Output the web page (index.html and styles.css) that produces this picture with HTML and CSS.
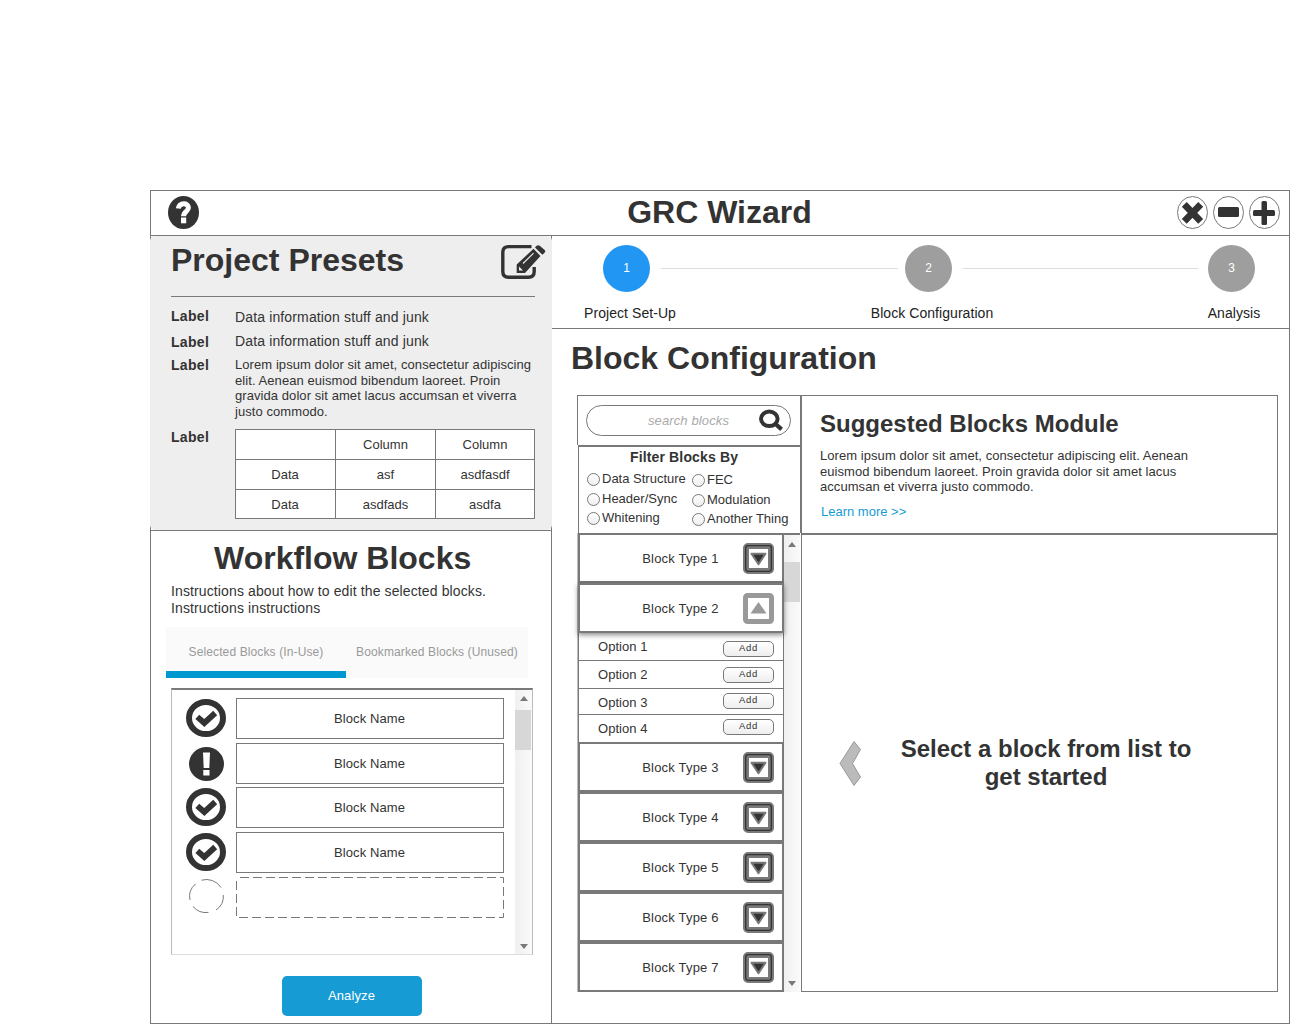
FILE: index.html
```
<!DOCTYPE html>
<html lang="en">
<head>
<meta charset="utf-8">
<title>GRC Wizard</title>
<link rel="stylesheet" href="styles.css">
</head>
<body>
<svg class="defs" width="0" height="0" aria-hidden="true">
  <symbol id="check" viewBox="0 0 40 38">
    <ellipse cx="20" cy="19" rx="17" ry="16" fill="#fff" stroke="#333" stroke-width="6"/>
    <path d="M11.300 17.800 L18.300 24 L29.200 14" fill="none" stroke="#333" stroke-width="5.800"/>
  </symbol>
  <symbol id="down" viewBox="0 0 31 31">
    <rect x="3" y="3" width="25" height="25" rx="2" fill="#fff" stroke="#797979" stroke-width="6"/>
    <rect x="2.7" y="2.7" width="25.6" height="25.6" rx="2.5" fill="none" stroke="#333" stroke-width="1.3"/>
    <path d="M8.5 10.7 H22.5 L15.5 21.3 Z" fill="#333" stroke="#797979" stroke-width="2" stroke-linejoin="round"/>
  </symbol>
  <symbol id="up" viewBox="0 0 31 31">
    <rect x="2.5" y="2.5" width="26" height="26" rx="2" fill="#fff" stroke="#999" stroke-width="5"/>
    <path d="M7.5 20.500 H23.5 L15.5 9 Z" fill="#999"/>
  </symbol>
</svg>
<div class="window">
  <header class="titlebar">
    <svg class="help" width="31" height="33" viewBox="0 0 31 33">
      <ellipse cx="15.500" cy="16.500" rx="15.500" ry="16.500" fill="#333"/>
      <path d="M10.300 12.500 C11 6.300 20.400 6.300 20.400 11.800 C20.400 15.300 15.600 15.500 15.600 20.300" fill="none" stroke="#fff" stroke-width="5"/>
      <rect x="13" y="21.500" width="5.200" height="5.800" fill="#fff"/>
    </svg>
    <h1>GRC Wizard</h1>
    <div class="controls">
      <svg width="31" height="33" viewBox="0 0 31 33"><ellipse cx="15.500" cy="16.500" rx="15" ry="16" fill="#fff" stroke="#797979"/><path d="M7.300 8.300 L23.700 25.400 M23.700 8.300 L7.300 25.400" stroke="#333" stroke-width="6.800"/></svg>
      <svg width="31" height="33" viewBox="0 0 31 33"><ellipse cx="15.500" cy="16.500" rx="15" ry="16" fill="#fff" stroke="#797979"/><rect x="5" y="11" width="21" height="10" rx="1.500" fill="#333"/></svg>
      <svg width="31" height="33" viewBox="0 0 31 33"><ellipse cx="15.500" cy="16.500" rx="15" ry="16" fill="#fff" stroke="#797979"/><rect x="4" y="14" width="22" height="6" rx="1.500" fill="#333"/><rect x="12.500" y="5" width="5.500" height="24" rx="1.500" fill="#333"/></svg>
    </div>
  </header>
  <div class="columns">
    <aside class="side">
      <section class="presets">
        <div class="presets-head">
          <h2>Project Presets</h2>
          <svg width="45" height="36" viewBox="0 0 45 36">
            <path d="M30.500 2.600 H7.500 Q1.800 2.600 1.800 8.300 V27.500 Q1.800 33.300 7.500 33.300 H27.500 Q33.200 33.300 33.200 27.500 V23" fill="none" stroke="#333" stroke-width="3.400"/>
            <path d="M15.700 29 V20.500 L32.500 4.800 L39.500 12 L24 29 Z" fill="#333"/>
            <path d="M34 3.400 Q36.500 .2 39 2 L43.700 6 Q45.300 8 41.300 10.800 Z" fill="#333"/>
            <path d="M22 19.500 L32.500 9.200" stroke="#eee" stroke-width="1.100"/>
            <path d="M18 22.500 V26.500 H22 L20 24.500 Z" fill="#eee"/>
          </svg>
        </div>
        <dl class="fields">
          <dt>Label</dt><dd class="line">Data information stuff and junk</dd>
          <dt class="raised">Label</dt><dd class="line second">Data information stuff and junk</dd>
          <dt>Label</dt><dd class="para">Lorem ipsum dolor sit amet, consectetur adipiscing<br>elit. Aenean euismod bibendum laoreet. Proin<br>gravida dolor sit amet lacus accumsan et viverra<br>justo commodo.</dd>
          <dt>Label</dt>
          <dd class="tablecell">
            <div class="table">
              <span></span><span>Column</span><span>Column</span>
              <span>Data</span><span>asf</span><span>asdfasdf</span>
              <span>Data</span><span>asdfads</span><span>asdfa</span>
            </div>
          </dd>
        </dl>
      </section>
      <section class="workflow">
        <h2>Workflow Blocks</h2>
        <p class="instructions">Instructions about how to edit the selected blocks.<br>Instructions instructions</p>
        <div class="tabs">
          <div class="tab active">Selected Blocks (In-Use)</div>
          <div class="tab">Bookmarked Blocks (Unused)</div>
        </div>
        <div class="blocklist">
          <div class="rows">
            <svg width="40" height="38"><use href="#check"/></svg><div class="block">Block Name</div>
            <svg width="35" height="34" viewBox="0 0 35 34"><ellipse cx="17.500" cy="17" rx="17.500" ry="17" fill="#333"/><path d="M14 5.500 H21 L20.300 21 H14.700 Z M14.300 23 H20.500 V28.500 H14.300 Z" fill="#fff"/></svg><div class="block">Block Name</div>
            <svg width="40" height="38"><use href="#check"/></svg><div class="block">Block Name</div>
            <svg width="40" height="38"><use href="#check"/></svg><div class="block">Block Name</div>
            <svg class="pending" width="35" height="34" viewBox="0 0 35 34"><path d="M12.500 1.200 A17 16.500 0 0 1 32 8.500 M34.300 16 A17 16.500 0 0 1 27 31 M19.500 33.400 A17 16.500 0 0 1 4 27.500 M1 21 A17 16.500 0 0 1 6.500 5" fill="none" stroke="#797979"/></svg>
            <svg class="empty" width="268" height="41" viewBox="0 0 268 41"><path d="M4 .5 H267.500 V40.500 H.5 V.5" fill="none" stroke="#797979" stroke-dasharray="9 4"/></svg>
          </div>
          <div class="scroll">
            <i class="arrow-up"></i><i class="thumb"></i><i class="arrow-down"></i>
          </div>
        </div>
        <button class="analyze">Analyze</button>
      </section>
    </aside>
    <main class="main">
      <div class="stepper">
        <div class="step current"><b>1</b><span>Project Set-Up</span></div>
        <i class="rail first"></i>
        <div class="step"><b>2</b><span>Block Configuration</span></div>
        <i class="rail"></i>
        <div class="step"><b>3</b><span>Analysis</span></div>
      </div>
      <h2 class="heading">Block Configuration</h2>
      <div class="config">
        <div class="left">
          <div class="searchbox">
            <div class="search">
              <span>search blocks</span>
              <svg width="26" height="24" viewBox="0 0 26 24"><ellipse cx="11.300" cy="9.800" rx="8.300" ry="7.200" fill="none" stroke="#333" stroke-width="4"/><path d="M17 14.500 L23.600 20.300" stroke="#333" stroke-width="4.200"/></svg>
            </div>
          </div>
          <div class="filters">
            <h4>Filter Blocks By</h4>
            <div class="radios">
              <div>
                <label><i></i>Data Structure</label>
                <label><i></i>Header/Sync</label>
                <label><i></i>Whitening</label>
              </div>
              <div class="shift">
                <label><i></i>FEC</label>
                <label><i></i>Modulation</label>
                <label><i></i>Another Thing</label>
              </div>
            </div>
          </div>
          <div class="types">
            <div class="items">
              <div class="item"><span>Block Type 1</span><svg width="31" height="31"><use href="#down"/></svg></div>
              <div class="item open"><span>Block Type 2</span><svg width="31" height="31"><use href="#up"/></svg></div>
              <div class="options">
                <div class="option">Option 1<button>Add</button></div>
                <div class="option">Option 2<button>Add</button></div>
                <div class="option">Option 3<button>Add</button></div>
                <div class="option">Option 4<button>Add</button></div>
              </div>
              <div class="item"><span>Block Type 3</span><svg width="31" height="31"><use href="#down"/></svg></div>
              <div class="item"><span>Block Type 4</span><svg width="31" height="31"><use href="#down"/></svg></div>
              <div class="item"><span>Block Type 5</span><svg width="31" height="31"><use href="#down"/></svg></div>
              <div class="item"><span>Block Type 6</span><svg width="31" height="31"><use href="#down"/></svg></div>
              <div class="item"><span>Block Type 7</span><svg width="31" height="31"><use href="#down"/></svg></div>
            </div>
            <div class="scroll">
              <i class="arrow-up"></i><i class="thumb"></i><i class="arrow-down"></i>
            </div>
          </div>
        </div>
        <div class="right">
          <div class="suggested">
            <h3>Suggested Blocks Module</h3>
            <p>Lorem ipsum dolor sit amet, consectetur adipiscing elit. Aenean<br>euismod bibendum laoreet. Proin gravida dolor sit amet lacus<br>accumsan et viverra justo commodo.</p>
            <a>Learn more &gt;&gt;</a>
          </div>
          <div class="placeholder">
            <svg width="24" height="48" viewBox="0 0 24 48"><path d="M15 1.500 L21.500 9.500 L13.500 23.500 L21.500 37 L15 45.500 L1 23.500 Z" fill="#bbb" stroke="#999"/></svg>
            <h3>Select a block from list to<br>get started</h3>
          </div>
        </div>
      </div>
    </main>
  </div>
</div>
</body>
</html>
```
FILE: styles.css
```
* { box-sizing: border-box; }
body {
  margin: 0;
  background: #fff;
  color: #333;
  font: 13px/15px "Liberation Sans", Arial, sans-serif;
  white-space: nowrap;
  overflow: hidden;
}
h1, h2, h3, h4, p, dl, dd { margin: 0; }
h1, h2 { font-size: 32px; line-height: 36px; }
h3 { font-size: 24px; line-height: 28px; }
svg { display: block; flex: none; }
.defs { position: absolute; }
button { font-family: inherit; padding: 0; }

.window { margin: 190px 0 0 150px; width: 1140px; height: 834px; border: 1px solid #797979; }
.titlebar {
  display: grid;
  grid-template-columns: 94px 1fr 104px;
  height: 45px;
  padding: 5px 8px 0 17px;
  border-bottom: 1px solid #797979;
}
.titlebar h1 { text-align: center; line-height: 32px; }
.controls { display: flex; gap: 5px; }

.columns { display: flex; height: 787px; }
.side { width: 401px; border-right: 1px solid #797979; }
.presets {
  width: 402px;
  height: 294px;
  margin-left: -1px;
  padding: 6px 17px 0 21px;
  background: #eee;
  border-radius: 5px;
}
.presets-head {
  display: flex;
  justify-content: space-between;
  height: 55px;
  margin-bottom: 10px;
  border-bottom: 1px solid #797979;
}
.presets-head svg { margin: 2px -11px 0 0; }
.fields { display: grid; grid-template-columns: 64px 300px; grid-template-rows: 27px 22px 72px 90px; }
.fields dt { font-weight: bold; font-size: 14px; line-height: 18px; letter-spacing: .3px; }
.fields .raised { margin-top: -1px; }
.line { font-size: 14px; line-height: 20px; letter-spacing: .14px; }
.second { margin-top: -3px; }
.para { line-height: 15.6px; margin-top: 1px; letter-spacing: .07px; }
.tablecell { padding-top: 1px; }
.table {
  display: grid;
  grid-template-columns: 100px 100px 99px;
  grid-template-rows: 30px 30px 29px;
  width: 300px;
  background: #fff;
  border: solid #797979;
  border-width: 1px 0 0 1px;
}
.table span { text-align: center; line-height: 29px; border: solid #797979; border-width: 0 1px 1px 0; }
.table span:nth-child(3n+1) { padding-right: 1px; }

.workflow { height: 493px; border-top: 1px solid #797979; }
.workflow h2 { padding: 9px 0 0 63px; }
.instructions { margin: 7px 0 0 20px; font-size: 14px; line-height: 17px; letter-spacing: .12px; }
.tabs { display: flex; width: 362px; height: 51px; margin: 10px 0 10px 15px; background: #fafafa; }
.tab { width: 182px; text-align: center; font-size: 12px; line-height: 50px; color: #999; letter-spacing: .12px; }
.tab.active { width: 180px; border-bottom: 7px solid #0099cf; }
.blocklist {
  display: flex;
  justify-content: space-between;
  width: 362px;
  height: 267px;
  margin-left: 20px;
  border: 1px solid #bbb;
  border-top: 2px solid #797979;
  border-bottom-color: #ddd;
}
.rows {
  display: grid;
  grid-template-columns: 40px 268px;
  grid-template-rows: 45px 44px 45px 45px 41px;
  column-gap: 10px;
  justify-items: center;
  padding: 8px 0 0 14px;
}
.rows > svg { margin-top: 1px; }
.rows > svg:nth-child(3) { margin-top: 4px; }
.rows > svg.pending { margin-top: 2px; }
.rows > svg.empty { margin-top: 0; }
.block { width: 268px; height: 41px; padding-right: 1px; border: 1px solid #797979; text-align: center; line-height: 39px; letter-spacing: .1px; }
.scroll {
  display: flex;
  flex-direction: column;
  align-items: center;
  width: 17px;
  background: linear-gradient(90deg, #f0f0f0, #fafafa);
}
.scroll i { flex: none; }
.arrow-up { border: 5px solid transparent; border-width: 0 4.5px 5px; border-bottom-color: #797979; margin-top: 6px; }
.arrow-down { border: 5px solid transparent; border-width: 5px 4.5px 0; border-top-color: #797979; margin-top: auto; }
.thumb { align-self: flex-start; width: 16px; height: 40px; margin-top: 9px; background: #d7d7d7; }
.blocklist .arrow-down { margin-bottom: 5px; }
.analyze {
  display: block;
  width: 140px;
  height: 40px;
  margin: 21px 0 0 131px;
  padding: 0 1px 2px 0;
  border: 0;
  border-radius: 5px;
  background: #169bd5;
  color: #fff;
  font-size: 13px;
  letter-spacing: .1px;
}

.main { flex: 1; }
.stepper { display: flex; height: 93px; padding: 9px 34px 0 51px; border-bottom: 1px solid #797979; }
.step { display: flex; flex-direction: column; align-items: center; gap: 13px; width: 47px; font-size: 14px; line-height: 16px; color: #222; }
.step b { width: 47px; height: 47px; border-radius: 50%; background: #9e9e9e; color: #fff; font: 12px/46px "Liberation Sans", Arial, sans-serif; text-align: center; }
.step.current b { background: #2196f3; }
.step span { margin-left: 7px; letter-spacing: .06px; }
.step:last-child span { margin-left: 5px; }
.rail { flex: none; width: 235px; height: 1px; margin: 23px 10px 0 11px; background: #ddd; }
.rail.first { width: 237px; margin-right: 7px; }
.heading { padding: 11px 0 0 19px; }
.config { display: flex; width: 701px; margin: 19px 0 0 25px; }
.left { width: 223px; }
.searchbox { height: 50px; padding: 9px 9px 0 8px; border: solid #797979; border-width: 1px 0 0 1px; }
.search {
  display: grid;
  grid-template-columns: 27px 1fr 26px;
  height: 31px;
  padding: 3px 6px 0 5px;
  border: 1px solid #797979;
  border-radius: 16px;
  text-align: center;
  font-style: italic;
  line-height: 23px;
  color: #aaa;
}
.search span { grid-column: 2; letter-spacing: .12px; }
.filters { height: 88px; margin-left: 1px; border: solid #797979; border-width: 2px 0 0 1px; }
.filters h4 { padding: 1px 0 0 51px; font-size: 14px; line-height: 18px; letter-spacing: .14px; }
.radios { display: grid; grid-template-columns: 105px 1fr; padding: 4px 0 0 8px; }
.radios label { display: flex; gap: 2px; height: 19.500px; line-height: 17px; }
.radios i { width: 13px; height: 13px; margin-top: 3px; border: 1px solid #797979; border-radius: 50%; background: linear-gradient(#fff, #eee); }
.shift { padding-top: 1px; }
.types { display: flex; height: 459px; border: solid #bbb; border-width: 0 0 0 1px; }
.items { width: 206px; }
.item {
  display: grid;
  grid-template-columns: 31px 1fr 31px;
  align-items: center;
  height: 50px;
  padding: 0 8px;
  border: 2px solid #797979;
  background: #fff;
  text-align: center;
  letter-spacing: .2px;
}
.item span { grid-column: 2; margin-right: 1px; }
.open { position: relative; box-shadow: 0 2px 5px rgba(0, 0, 0, .45); }
.options { display: grid; grid-template-rows: 28px 28px 26px 27px; border: solid #797979; border-width: 0 1px; }
.option { display: flex; justify-content: space-between; padding: 6px 9px 0 19px; border-bottom: 1px solid #797979; letter-spacing: .05px; }
.option:last-child { border-bottom: 0; }
.option button { width: 51px; height: 16px; padding-bottom: 2px; border: 1px solid #797979; border-radius: 5px; background: linear-gradient(#fff, #eee); color: #333; font-size: 9.500px; line-height: 12px; letter-spacing: .7px; }
.option:nth-child(1) button { margin-top: 2px; }
.option:nth-child(n+3) button { margin-top: -2px; }
.types .scroll { width: 16px; border: solid #797979; border-width: 2px 0 0; }
.types .arrow-up { margin-top: 7px; }
.types .thumb { margin-top: 15px; }
.types .arrow-down { margin-bottom: 6px; }
.right { width: 478px; }
.suggested { height: 138px; padding: 14px 0 0 18px; border: 1px solid #797979; border-left-width: 2px; border-bottom: 0; }
.suggested p { margin-top: 10px; line-height: 15.600px; letter-spacing: .06px; }
.suggested a { display: block; margin: 9px 0 0 1px; color: #169bd5; }
.placeholder {
  display: flex;
  height: 459px;
  margin-left: 1px;
  padding: 205px 0 0 37px;
  border: 1px solid #797979;
  border-top-width: 2px;
}
.placeholder h3 { width: 330px; margin-left: 18px; text-align: center; margin-top: -5px; }
```
